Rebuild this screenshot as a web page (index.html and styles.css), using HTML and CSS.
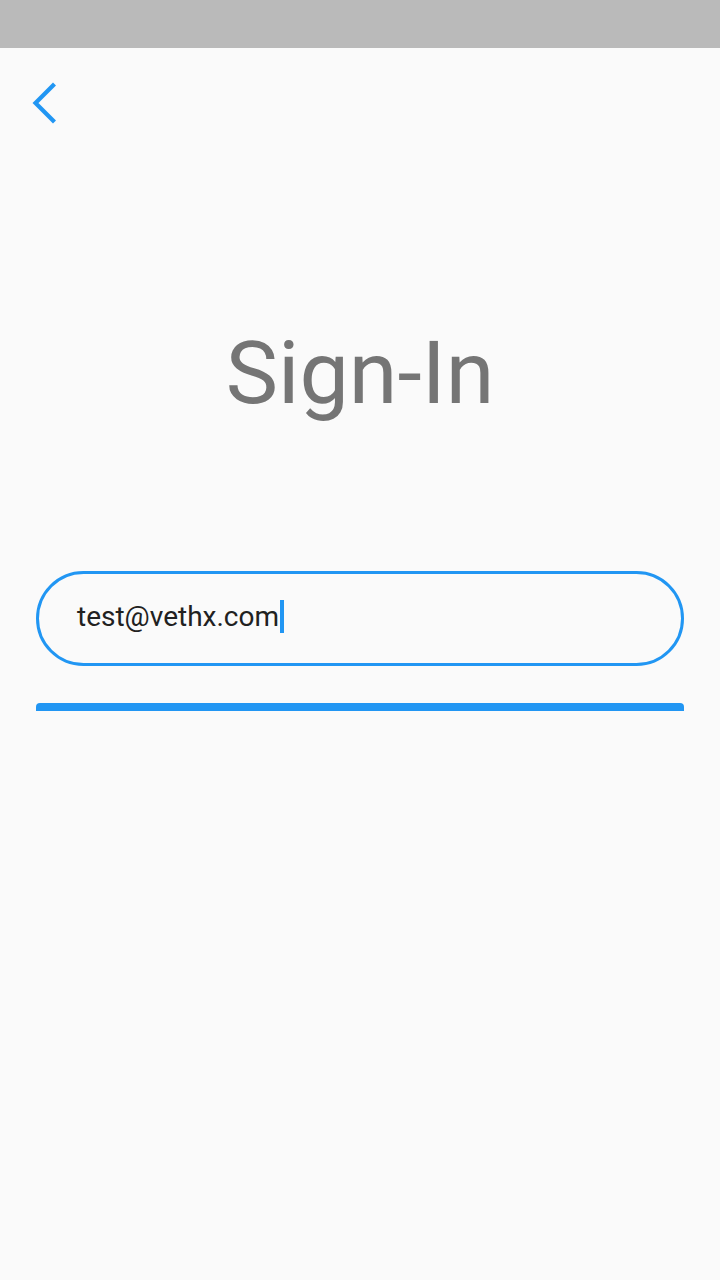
FILE: index.html
```html
<!DOCTYPE html>
<html>
<head>
<meta charset="utf-8">
<link rel="stylesheet" href="styles.css">
</head>
<body>
<div class="status"></div>
<div class="appbar">
  <button class="back" aria-label="Back">
    <svg width="48" height="48" viewBox="0 0 48 48"><path d="M33 6.5 L15.5 24 L33 41.5" fill="none" stroke="#2196f3" stroke-width="4.2" stroke-linecap="square"/></svg>
  </button>
</div>
<main class="content">
  <h1 class="title">Sign-In</h1>
  <div class="field">
    <span class="value">test@vethx.com</span><span class="cursor"></span>
  </div>
  <div class="button-clip"><div class="button"></div></div>
</main>
</body>
</html>
```
FILE: styles.css
```css
html, body {
  margin: 0;
  padding: 0;
  background: #fafafa;
  width: 720px;
  height: 1280px;
  overflow: hidden;
  font-family: Roboto, "Noto Sans", sans-serif;
}
.status {
  height: 48px;
  background: #bababa;
}
.appbar {
  height: 112px;
  display: flex;
  align-items: flex-start;
  padding-left: 20px;
}
.back {
  border: 0;
  background: none;
  padding: 0;
  width: 48px;
  height: 48px;
  display: block;
  margin-top: 31px;
}
.back svg { display: block; }
.content {
  display: flex;
  flex-direction: column;
  align-items: center;
  padding: 0 36px;
}
.title {
  margin: 157px 0 0;
  font-weight: 400;
  font-size: 88px;
  line-height: 112px;
  color: #757575;
  letter-spacing: 0;
}
.field {
  margin-top: 142px;
  box-sizing: border-box;
  width: 648px;
  height: 95px;
  border: 3px solid #2196f3;
  border-radius: 48px;
  display: flex;
  align-items: center;
  padding-left: 38px;
}
.value {
  font-size: 28px;
  color: #212121;
  line-height: 32px;
  margin-top: -4px;
}
.cursor {
  width: 4px;
  height: 33px;
  background: #2196f3;
  margin-left: 1px;
  margin-top: -4px;
}
.button-clip {
  margin-top: 37px;
  width: 648px;
  height: 8px;
  overflow: hidden;
}
.button {
  height: 48px;
  background: #2196f3;
  border-radius: 4px;
}
```
